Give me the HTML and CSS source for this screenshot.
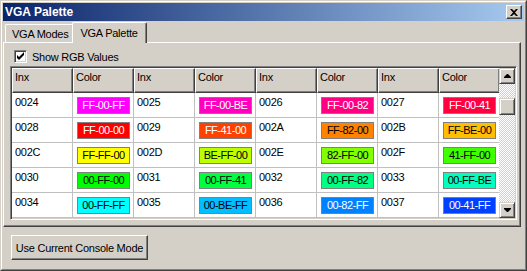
FILE: index.html
```html
<!DOCTYPE html>
<html lang="en">
<head>
  <meta charset="UTF-8" />
  <title>VGA Palette</title>
  <link rel="stylesheet" href="styles.css">
</head>
<body>
  <div class="window">
    <div class="frame">
      <div class="titlebar">
        <span class="title">VGA Palette</span>
        <span class="close">
          <svg width="8" height="7" viewBox="0 0 8 7"><path d="M0 0h2l2 2 2-2h2L5 3.5 8 7H6L4 5 2 7H0l3-3.5z" fill="#000"/></svg>
        </span>
      </div>

      <div class="tabs">
        <div class="tab">VGA Modes</div>
        <div class="tab active">VGA Palette</div>
      </div>

      <div class="pane">
        <label class="check">
          <span class="box">
            <svg width="9" height="9" viewBox="0 0 9 9"><path d="M1 3v3l2 2 5-5V0L3 5z" fill="#000"/></svg>
          </span>
          Show RGB Values
        </label>

        <div class="list">
          <div class="grid-wrap">
            <div class="grid" id="grid">
              <div class="head">Inx</div><div class="head">Color</div>
              <div class="head">Inx</div><div class="head">Color</div>
              <div class="head">Inx</div><div class="head">Color</div>
              <div class="head">Inx</div><div class="head">Color</div>
            </div>
          </div>
          <div class="scrollbar">
            <div class="sbtn"><svg width="7" height="4" viewBox="0 0 7 4"><path d="M3 0h1l3 3v1H0V3z" fill="#000"/></svg></div>
            <div class="thumb"></div>
            <div class="track"></div>
            <div class="sbtn"><svg width="7" height="4" viewBox="0 0 7 4"><path d="M0 0h7v1L4 4H3L0 1z" fill="#000"/></svg></div>
          </div>
        </div>
      </div>

      <div class="footer">
        <button class="btn">Use Current Console Mode</button>
      </div>
    </div>
  </div>

  <script>
    const colors = [
      'FF-00-FF', 'FF-00-BE', 'FF-00-82', 'FF-00-41',
      'FF-00-00', 'FF-41-00', 'FF-82-00', 'FF-BE-00',
      'FF-FF-00', 'BE-FF-00', '82-FF-00', '41-FF-00',
      '00-FF-00', '00-FF-41', '00-FF-82', '00-FF-BE',
      '00-FF-FF', '00-BE-FF', '00-82-FF', '00-41-FF'
    ];
    const grid = document.getElementById('grid');

    colors.forEach(function (c, i) {
      const inx = document.createElement('div');
      inx.className = 'cell';
      inx.textContent = (0x24 + i).toString(16).toUpperCase().padStart(4, '0');

      const parts = c.split('-').map(function (h) { return parseInt(h, 16); });
      const lum = parts[0] * 0.299 + parts[1] * 0.587 + parts[2] * 0.114;

      const cell = document.createElement('div');
      cell.className = 'cell';
      const sw = document.createElement('span');
      sw.className = 'swatch' + (lum > 128 ? '' : ' light');
      sw.style.background = '#' + c.replace(/-/g, '');
      sw.textContent = c;
      cell.appendChild(sw);

      grid.appendChild(inx);
      grid.appendChild(cell);
    });
  </script>
</body>
</html>
```

FILE: styles.css
```css
body {
  margin: 0;
  background: #d4d0c8;
  font-family: 'Liberation Sans', Arial, sans-serif;
  font-size: 11px;
  letter-spacing: -0.25px;
  color: #000;
}

.window {
  width: 527px;
  height: 271px;
  box-sizing: border-box;
  border: 1px solid;
  border-color: #d4d0c8 #404040 #404040 #d4d0c8;
}

.frame {
  height: 100%;
  box-sizing: border-box;
  border: 1px solid;
  border-color: #fff #808080 #808080 #fff;
  padding: 1px;
}

.titlebar {
  height: 18px;
  display: flex;
  align-items: center;
  justify-content: space-between;
  padding: 0 2px;
  background: linear-gradient(to right, #0a246a, #a6caf0);
  color: #fff;
  font-weight: bold;
  font-size: 12px;
  letter-spacing: 0;
}

.close {
  width: 16px;
  height: 14px;
  box-sizing: border-box;
  display: flex;
  align-items: center;
  justify-content: center;
  background: #d4d0c8;
  border: 1px solid;
  border-color: #fff #404040 #404040 #fff;
  box-shadow: inset -1px -1px #808080;
}

/* tabs */
.tabs {
  height: 20px;
  margin-top: 1px;
  padding-left: 2px;
  display: flex;
  align-items: flex-end;
}

.tab {
  height: 18px;
  box-sizing: border-box;
  padding: 0 5px 0 6px;
  display: flex;
  align-items: center;
  background: #d4d0c8;
  border-top: 1px solid #fff;
  border-left: 1px solid #fff;
  border-right: 1px solid #404040;
  border-radius: 2px 2px 0 0;
  box-shadow: inset -1px 0 #808080;
}

.tab.active {
  height: 21px;
  margin-bottom: -1px;
  margin-left: -2px;
  padding: 0 8px 1px 7px;
  position: relative;
  z-index: 1;
}

.pane {
  width: 518px;
  height: 185px;
  box-sizing: border-box;
  border: 1px solid;
  border-color: #fff #404040 #404040 #fff;
  box-shadow: inset -1px -1px #808080;
}

.check {
  display: flex;
  align-items: center;
  gap: 5px;
  margin: 7px 0 0 10px;
  height: 13px;
}

.box {
  width: 13px;
  height: 13px;
  box-sizing: border-box;
  display: flex;
  align-items: center;
  justify-content: center;
  background: #fff;
  border: 1px solid;
  border-color: #808080 #fff #fff #808080;
  box-shadow: inset 1px 1px #404040, inset -1px -1px #d4d0c8;
}

/* list view */
.list {
  width: 507px;
  height: 154px;
  box-sizing: border-box;
  margin: 3px 0 0 6px;
  display: flex;
  background: #fff;
  border: 1px solid;
  border-color: #808080 #fff #fff #808080;
  box-shadow: inset 1px 1px #404040, inset -1px -1px #d4d0c8;
  padding: 1px;
}

.grid-wrap {
  width: 487px;
  overflow: hidden;
}

.grid {
  display: grid;
  grid-template-columns: repeat(8, 61px);
  grid-auto-rows: 25px;
}

.head {
  box-sizing: border-box;
  padding: 2px 0 0 2px;
  background: #d4d0c8;
  border: 1px solid;
  border-color: #fff #404040 #404040 #fff;
  box-shadow: inset -1px -1px #808080;
}

.cell {
  box-sizing: border-box;
  padding: 3px 0 0 3px;
  border-right: 1px solid #c0c0c0;
  border-bottom: 1px solid #c0c0c0;
}

.swatch {
  display: block;
  width: 53px;
  height: 17px;
  box-sizing: border-box;
  margin: 1px 0 0 1px;
  border: 1px solid #808080;
  line-height: 15px;
  text-align: center;
  letter-spacing: -0.5px;
  color: #000;
}

.swatch.light {
  color: #fff;
}

.scrollbar {
  width: 16px;
  display: flex;
  flex-direction: column;
  background: repeating-conic-gradient(#fff 0 25%, #d4d0c8 0 50%) 0 0 / 2px 2px;
}

.sbtn,
.thumb {
  width: 16px;
  box-sizing: border-box;
  background: #d4d0c8;
  border: 1px solid;
  border-color: #d4d0c8 #404040 #404040 #d4d0c8;
  box-shadow: inset 1px 1px #fff, inset -1px -1px #808080;
}

.sbtn {
  height: 16px;
  display: flex;
  align-items: center;
  justify-content: center;
}

.thumb {
  height: 17px;
  margin-top: 14px;
}

.track {
  flex: 1;
}

.footer {
  padding: 8px 0 0 8px;
}

.btn {
  width: 137px;
  height: 25px;
  padding: 0;
  font-family: inherit;
  font-size: 11px;
  letter-spacing: -0.25px;
  color: #000;
  background: #d4d0c8;
  border: 1px solid;
  border-color: #fff #404040 #404040 #fff;
  box-shadow: inset -1px -1px #808080;
}
```
